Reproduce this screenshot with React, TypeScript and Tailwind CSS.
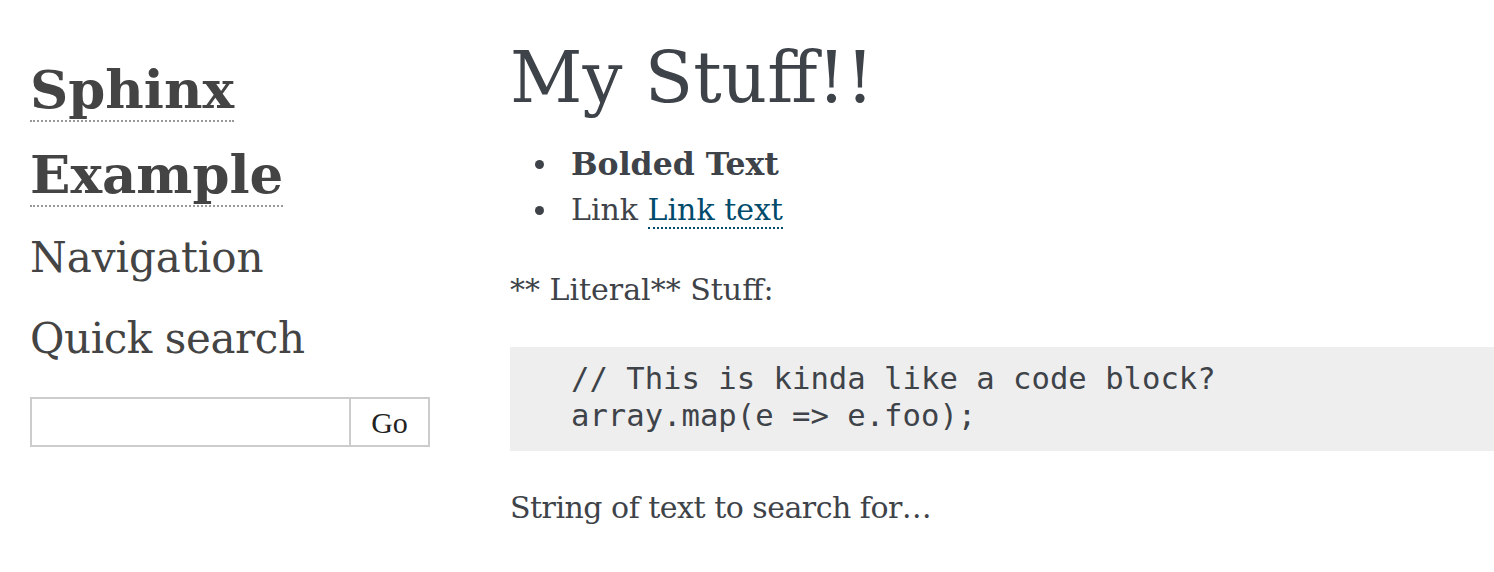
function Bullet() {
  return (
    <span className="flex w-[61px] shrink-0 items-center pl-[25px]">
      <span className="mt-[1px] block h-[9px] w-[9px] rounded-full bg-[#3E4349]" />
    </span>
  );
}

export default function App() {
  return (
    <div className="flex h-[572px] w-full overflow-hidden bg-white">
      <aside className="w-[510px] shrink-0 pl-[30px] text-[#444] font-['DejaVu_Serif',serif]">
        <h1 className="mt-[47px] text-[53px] font-bold leading-[85px]">
          <a href="#" className="border-b-2 border-dotted border-[#999]">
            Sphinx
            <br />
            Example
          </a>
        </h1>
        <h3 className="text-[42px] font-normal leading-[81px]">Navigation</h3>
        <h3 className="text-[42px] font-normal leading-[81px] tracking-[-0.4px]">Quick search</h3>
        <form
          className="mt-[18px] flex h-[50px] w-[400px] border-2 border-[#ccc]"
          onSubmit={(e) => e.preventDefault()}
        >
          <input type="text" className="min-w-0 flex-1 bg-white outline-none" aria-label="search" />
          <button
            type="submit"
            className="w-[79px] border-l-2 border-[#ccc] bg-white text-[30px] text-[#222] font-['Liberation_Serif',serif]"
          >
            Go
          </button>
        </form>
      </aside>
      <main className="min-w-0 flex-1 text-[#3E4349] text-[30px] leading-[46px] font-['DejaVu_Serif',serif]">
        <h1 className="mt-[41px] text-[70.7px] font-normal leading-[74px]">My Stuff!!</h1>
        <ul className="mt-[26px]">
          <li className="flex">
            <Bullet />
            <strong className="text-[31.5px] font-bold">Bolded Text</strong>
          </li>
          <li className="flex">
            <Bullet />
            <span>
              Link{" "}
              <a href="#" className="text-[#004B6B] border-b-2 border-dotted border-[#004B6B]">
                Link text
              </a>
            </span>
          </li>
        </ul>
        <p className="mt-[34px]">** Literal** Stuff:</p>
        <pre className="mt-[34px] bg-[#eee] pt-[13px] pb-[17px] pl-[61px] text-[30.6px] leading-[37px] text-[#3E4349] font-['DejaVu_Sans_Mono',monospace]">
{`// This is kinda like a code block?
array.map(e => e.foo);`}
        </pre>
        <p className="mt-[34px] tracking-[-0.5px]">String of text to search for…</p>
      </main>
    </div>
  );
}
